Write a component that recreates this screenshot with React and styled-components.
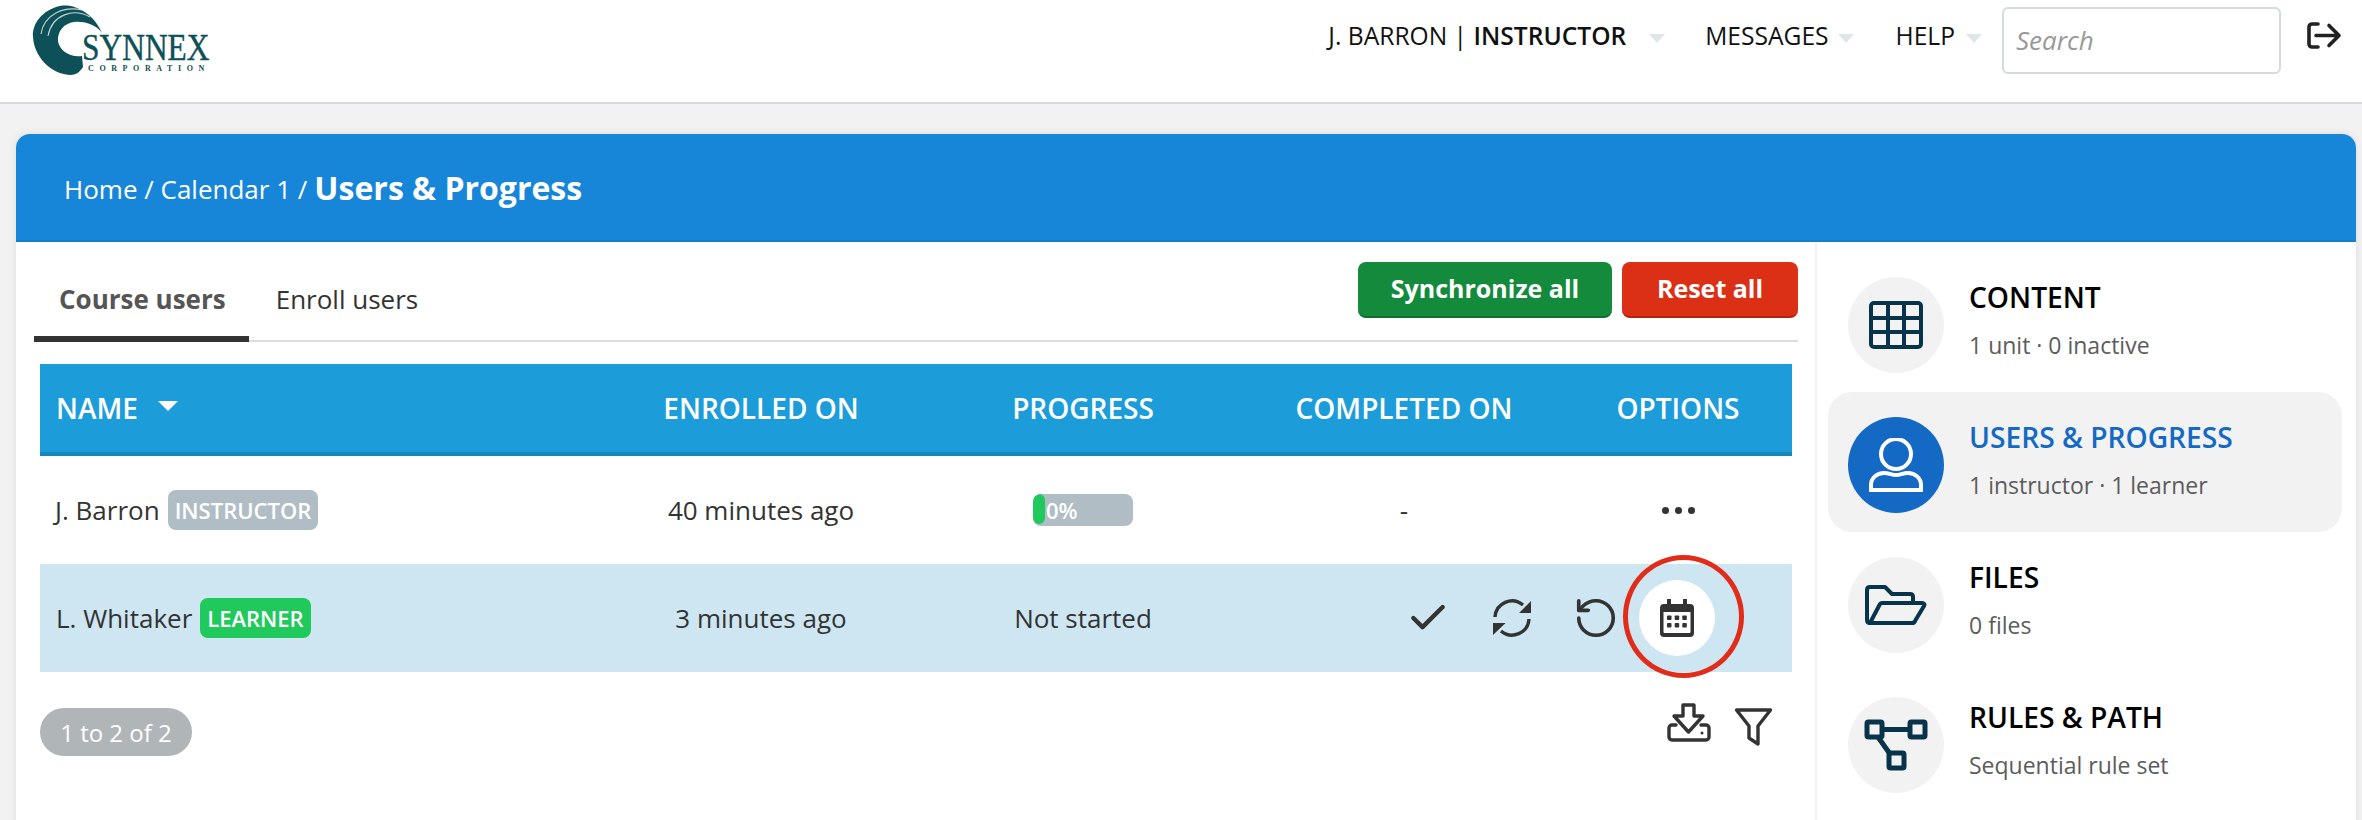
import React from "react";
import styled, { createGlobalStyle } from "styled-components";
import { Check, RotateCcw } from "lucide-react";

const Global = createGlobalStyle`
  html, body { margin: 0; padding: 0; height: 820px; overflow: hidden; background: #f2f2f2; }
  body { font-family: "Open Sans", "Liberation Sans", sans-serif; color: #333; }
  * { box-sizing: border-box; }
`;

const Page = styled.div`width: 2362px; height: 820px; overflow: hidden;`;

const TopBar = styled.header`
  height: 104px; background: #fff; border-bottom: 2px solid #d2dcdc;
  display: flex; align-items: flex-start; justify-content: space-between;
  padding: 0 20px 0 20px;
`;
const LogoSvg = styled.svg`display: block; width: 210px; height: 100px;`;
const Nav = styled.nav`display: flex; align-items: center; height: 80px;`;
const NavText = styled.span`
  font-size: 24.6px; color: #111; white-space: nowrap; margin-left: ${p => p.$ml || 0}px;
  position: relative; top: -5px;
  b { font-weight: 600; }
`;
const Caret = styled.i`
  display: block; width: 0; height: 0; margin-left: ${p => p.$ml}px; margin-top: -4px;
  border-left: 8px solid transparent; border-right: 8px solid transparent;
  border-top: 9px solid #dfe5e8;
`;
const SearchBox = styled.input`
  width: 279px; height: 67px; margin-left: 20px;
  border: 2px solid #d2dcdc; border-radius: 6px; padding: 0 12px;
  font: italic 26px "Open Sans", sans-serif; color: #333; outline: none;
  &::placeholder { color: #999; opacity: 1; }
`;
const ExitSvg = styled.svg`display: block; width: 35px; height: 27px; margin-left: 26px; margin-top: -9px;`;

const Card = styled.section`
  margin: 30px 6px 0 16px; background: #fff; border-radius: 14px 14px 0 0;
  box-shadow: 0 0 10px rgba(0,0,0,.09); height: 700px;
`;
const Banner = styled.div`
  height: 108px; background: #1786d8; border-radius: 14px 14px 0 0;
  border-bottom: 2px solid #157fc9;
  display: flex; align-items: center; padding: 4px 0 0 48px; color: #fff;
  font-size: 26px;
  span { margin-right: 7px; }
  strong { font-size: 32px; font-weight: 700; position: relative; top: -2px; }
`;
const Body = styled.div`display: flex; height: 592px;`;
const Main = styled.div`
  width: 1801px; flex: none; border-right: 2px solid #f2f2f2; padding: 20px 17px 0 18px;
`;
const TabBar = styled.div`
  display: flex; align-items: flex-start; height: 80px; border-bottom: 2px solid #ddd;
`;
const Tab = styled.div`
  height: 80px; display: flex; align-items: center; font-size: 26px; padding: 0 ${p => p.$pad}px 0 ${p => p.$padL}px;
  color: ${p => p.$active ? "#555" : "#333"}; font-weight: ${p => p.$active ? 700 : 400};
  border-bottom: ${p => p.$active ? "6px solid #333" : "0"};
  padding-bottom: ${p => p.$active ? 0 : 6}px;
`;
const Actions = styled.div`margin-left: auto; display: flex; gap: 10px;`;
const Btn = styled.button`
  width: ${p => p.$w}px; height: 56px; border: 0; border-radius: 8px; color: #fff;
  background: ${p => p.$bg}; border-bottom: 2px solid ${p => p.$edge};
  font: 700 25px "Open Sans", sans-serif; padding: 0 0 3px;
`;
const Table = styled.div`margin: 22px 6px 0 6px;`;
const COLS = "560px 322px 322px 320px 228px";
const HeadRow = styled.div`
  display: grid; grid-template-columns: ${COLS}; height: 92px; align-items: center;
  background: #1c9dda; border-bottom: 4px solid #1788bb; color: #fff;
  font-size: 28px; font-weight: 600; text-align: center;
`;
const NameHead = styled.div`display: flex; align-items: center; padding-left: 16px; gap: 20px;`;
const SortCaret = styled.i`
  display: block; width: 0; height: 0; margin-top: -4px;
  border-left: 10px solid transparent; border-right: 10px solid transparent; border-top: 10px solid #fff;
`;
const Row = styled.div`
  display: grid; grid-template-columns: ${COLS}; height: 108px; align-items: center;
  background: ${p => p.$hi ? "#cee6f2" : "#fff"}; font-size: 26px; text-align: center; color: #333;
`;
const NameCell = styled.div`display: flex; align-items: center; padding-left: ${p => p.$pl}px; gap: 8px;`;
const Role = styled.span`
  height: 40px; padding: 0 7px; display: flex; align-items: center; border-radius: 8px;
  background: ${p => p.$bg}; color: #fff; font-size: 22px; font-weight: 600;
`;
const Bar = styled.div`
  width: 100px; height: 32px; margin: 0 auto; background: #b1bdc5; border-radius: 8px;
  display: flex; align-items: center; color: #fff; font-size: 22px; font-weight: 600; overflow: hidden;
`;
const BarFill = styled.i`display: block; width: 12px; height: 30px; margin-top: -2px; background: #1fc95b; border-radius: 6px; margin-right: 1px;`;
const Dots = styled.div`display: flex; justify-content: center; gap: 6px;`;
const Dot = styled.i`display: block; width: 7px; height: 7px; border-radius: 50%; background: #333;`;
const RowActions = styled.div`
  grid-column: 4 / span 2; display: flex; justify-content: flex-end; align-items: center; padding-right: 73px;
`;
const IconBtn = styled.div`
  width: 84px; height: 76px; display: flex; align-items: center; justify-content: center; position: relative;
  margin-left: ${p => p.$pull ? -3 : 0}px;
`;
const IconDisc = styled.div`
  width: 76px; height: 76px; border-radius: 50%; background: #fff; display: flex; align-items: center; justify-content: center;
`;
const Callout = styled.i`
  position: absolute; left: -12px; top: -25px; width: 121px; height: 123px;
  border: 5px solid #e02c18; border-radius: 50%;
`;
const Foot = styled.div`display: flex; align-items: flex-start; justify-content: space-between; padding: 31px 19px 0 0;`;
const Pager = styled.div`
  width: 152px; height: 48px; margin-top: 5px; border-radius: 24px; background: #b0b5b8; color: #fff; font-size: 24px;
  display: flex; align-items: center; justify-content: center;
`;
const FootIcons = styled.div`display: flex; align-items: flex-start; gap: 23px;`;
const Svg = styled.svg`display: block; margin-top: ${p => p.$mt || 0}px;`;

const Side = styled.aside`flex: 1; padding: 10px 14px 0 11px;`;
const SideItem = styled.div`
  height: 140px; display: flex; align-items: flex-start; gap: 25px; padding: 25px 0 0 20px; border-radius: 24px;
  background: ${p => p.$active ? "#f2f2f2" : "transparent"};
`;
const Disc = styled.div`
  width: 96px; height: 96px; border-radius: 50%; flex: none; display: flex; align-items: center; justify-content: center;
  background: ${p => p.$active ? "#1469c4" : "#f2f2f2"};
`;
const SideText = styled.div`padding-top: 1px;`;
const SideTitle = styled.div`
  font-size: 28.2px; font-weight: 600; line-height: 38px; color: ${p => p.$active ? "#1469c4" : "#000"};
`;
const SideSub = styled.div`font-size: 23px; color: #5c5c5c; line-height: 30px; margin-top: 14px;`;

const Logo = () => (
  <LogoSvg viewBox="0 0 210 100">
    <path fill="#0e5058" d="M82 33C74 14 55 3 40 6C22 10 12 24 13 37C14 56 30 74 50 75C56 75 60 72 63 67L62 56C50 58 39 50 38 41C37 32 44 23 54 22C66 21 76 25 82 33Z" />
    <path fill="none" stroke="#fff" strokeWidth="1.1" opacity=".75" d="M70 17C54 8 32 14 28 36M62 10C44 6 24 14 21 34" />
    <text transform="translate(62 60) scale(.85 1)" fontFamily="Liberation Serif, serif" fontSize="37" fill="#0e5058" stroke="#0e5058" strokeWidth=".4">SYNNEX</text>
    <text x="68" y="71" fontFamily="Liberation Serif, serif" fontWeight="700" fontSize="8" letterSpacing="5.6" fill="#0e5058">CORPORATION</text>
  </LogoSvg>
);

const Exit = () => (
  <ExitSvg viewBox="0 0 35 27" fill="none" stroke="#222" strokeWidth="3.6" strokeLinecap="round" strokeLinejoin="round">
    <path d="M11 2H5a3 3 0 0 0-3 3v17a3 3 0 0 0 3 3h6" />
    <path d="M9 13.500h23M22 3.500l10 10-10 10" />
  </ExitSvg>
);

const SyncIcon = () => (
  <Svg width="38" height="38" viewBox="0 0 38 38" fill="none">
    <g stroke="#333" strokeWidth="3.4">
      <path d="M2 18A17 17 0 0 1 30 6" />
      <path d="M36 20A17 17 0 0 1 8 32" />
    </g>
    <path fill="#333" d="M38 2V14H26ZM0 36V24H12.6Z" />
  </Svg>
);

const CalendarIcon = () => (
  <Svg width="34" height="38" viewBox="0 0 34 38">
    <path fill="#333" d="M7 0h4v5h12V0h4v5h3a4 4 0 0 1 4 4v25a4 4 0 0 1-4 4H4a4 4 0 0 1-4-4V9a4 4 0 0 1 4-4h3Z M3.500 13v20a1 1 0 0 0 1 1h25a1 1 0 0 0 1-1V13Z" fillRule="evenodd" />
    <g fill="#333">
      <rect x="7" y="16.500" width="4.500" height="4.500" rx=".8" />
      <rect x="14.700" y="16.500" width="4.500" height="4.500" rx=".8" />
      <rect x="22.300" y="16.500" width="4.500" height="4.500" rx=".8" />
      <rect x="7" y="24" width="4.500" height="4.500" rx=".8" />
      <rect x="14.700" y="24" width="4.500" height="4.500" rx=".8" />
      <rect x="22.300" y="24" width="4.500" height="4.500" rx=".8" />
    </g>
  </Svg>
);

const DownloadIcon = () => (
  <Svg width="44" height="39" viewBox="0 0 44 39" fill="none" stroke="#333" strokeWidth="3.4" strokeLinejoin="round" strokeLinecap="round">
    <path d="M16 2h11v11h9L21.500 29 7 13h9Z" />
    <path d="M9 22H5a3 3 0 0 0-3 3v9a3 3 0 0 0 3 3h34a3 3 0 0 0 3-3v-9a3 3 0 0 0-3-3h-5" />
    <circle cx="35" cy="30" r="1.500" fill="#333" stroke="none" />
  </Svg>
);

const FilterIcon = () => (
  <Svg $mt={4} width="39" height="39" viewBox="0 0 39 39" fill="none" stroke="#333" strokeWidth="3.4" strokeLinejoin="round">
    <path d="M2.500 3H36.500L24 19V37L15 31V19Z" />
  </Svg>
);

const dark = "#07344a";
const GridIcon = () => (
  <svg width="54" height="48" viewBox="0 0 54 48" fill="none" stroke={dark} strokeWidth="4">
    <rect x="2" y="2" width="50" height="44" rx="3" />
    <path d="M19 2V46M35 2V46M2 17H52M2 31H52" />
  </svg>
);
const UserIcon = () => (
  <svg width="54" height="54" viewBox="0 0 54 54" fill="none" stroke="#fff" strokeWidth="4">
    <circle cx="27" cy="16" r="15" />
    <path d="M2 52V47C2 40 8 35 15 35C20 35 23 37 27 37C31 37 34 35 39 35C46 35 52 40 52 47V52Z" />
  </svg>
);
const FolderIcon = () => (
  <svg width="62" height="40" viewBox="0 0 62 40" fill="none" stroke={dark} strokeWidth="4" strokeLinejoin="round">
    <path d="M5 38C3 38 2 37 2 35V5C2 3 3 2 5 2H20L27 9H45C47 9 48 10 48 12V18" />
    <path d="M5 38L15 19C15.500 18.200 16.500 18 17 18H57C59 18 60 19.500 59 21L50 36C49.500 37.500 48 38 47 38Z" />
  </svg>
);
const PathIcon = () => (
  <svg width="64" height="52" viewBox="0 0 64 52" fill="none" stroke={dark} strokeWidth="5" strokeLinejoin="round">
    <rect x="3" y="3" width="15" height="15" rx="1.500" />
    <rect x="46" y="3" width="15" height="15" rx="1.500" />
    <rect x="25" y="34" width="15" height="15" rx="1.500" />
    <path d="M18 10.500H46M14 18L26 35" />
  </svg>
);

const sideItems = [
  { icon: <GridIcon />, title: "CONTENT", sub: "1 unit · 0 inactive" },
  { icon: <UserIcon />, title: "USERS & PROGRESS", sub: "1 instructor · 1 learner", active: true },
  { icon: <FolderIcon />, title: "FILES", sub: "0 files" },
  { icon: <PathIcon />, title: "RULES & PATH", sub: "Sequential rule set" },
];

export default function App() {
  return (
    <Page>
      <Global />
      <TopBar>
        <Logo />
        <Nav>
          <NavText>J. BARRON | <b>INSTRUCTOR</b></NavText>
          <Caret $ml={23} />
          <NavText $ml={40}>MESSAGES</NavText>
          <Caret $ml={9} />
          <NavText $ml={42}>HELP</NavText>
          <Caret $ml={11} />
          <SearchBox placeholder="Search" readOnly />
          <Exit />
        </Nav>
      </TopBar>
      <Card>
        <Banner>
          <span>Home / Calendar 1 /</span>
          <strong>Users &amp; Progress</strong>
        </Banner>
        <Body>
          <Main>
            <TabBar>
              <Tab $active $padL={25} $pad={23}>Course users</Tab>
              <Tab $padL={27} $pad={20}>Enroll users</Tab>
              <Actions>
                <Btn $w={254} $bg="#148a3c" $edge="#0f6f2f">Synchronize all</Btn>
                <Btn $w={176} $bg="#db2f16" $edge="#b02510">Reset all</Btn>
              </Actions>
            </TabBar>
            <Table>
              <HeadRow>
                <NameHead>NAME <SortCaret /></NameHead>
                <div>ENROLLED ON</div>
                <div>PROGRESS</div>
                <div>COMPLETED ON</div>
                <div>OPTIONS</div>
              </HeadRow>
              <Row>
                <NameCell $pl={15}>J. Barron <Role $bg="#b1bdc5">INSTRUCTOR</Role></NameCell>
                <div>40 minutes ago</div>
                <Bar><BarFill />0%</Bar>
                <div>-</div>
                <Dots><Dot /><Dot /><Dot /></Dots>
              </Row>
              <Row $hi>
                <NameCell $pl={16}>L. Whitaker <Role $bg="#1fc95b">LEARNER</Role></NameCell>
                <div>3 minutes ago</div>
                <div>Not started</div>
                <RowActions>
                  <IconBtn><Check size={44} color="#333" strokeWidth={2.4} /></IconBtn>
                  <IconBtn><SyncIcon /></IconBtn>
                  <IconBtn><RotateCcw size={46} color="#333" strokeWidth={1.9} /></IconBtn>
                  <IconBtn $pull>
                    <IconDisc><CalendarIcon /></IconDisc>
                    <Callout />
                  </IconBtn>
                </RowActions>
              </Row>
              <Foot>
                <Pager>1 to 2 of 2</Pager>
                <FootIcons><DownloadIcon /><FilterIcon /></FootIcons>
              </Foot>
            </Table>
          </Main>
          <Side>
            {sideItems.map(it => (
              <SideItem key={it.title} $active={it.active}>
                <Disc $active={it.active}>{it.icon}</Disc>
                <SideText>
                  <SideTitle $active={it.active}>{it.title}</SideTitle>
                  <SideSub>{it.sub}</SideSub>
                </SideText>
              </SideItem>
            ))}
          </Side>
        </Body>
      </Card>
    </Page>
  );
}
